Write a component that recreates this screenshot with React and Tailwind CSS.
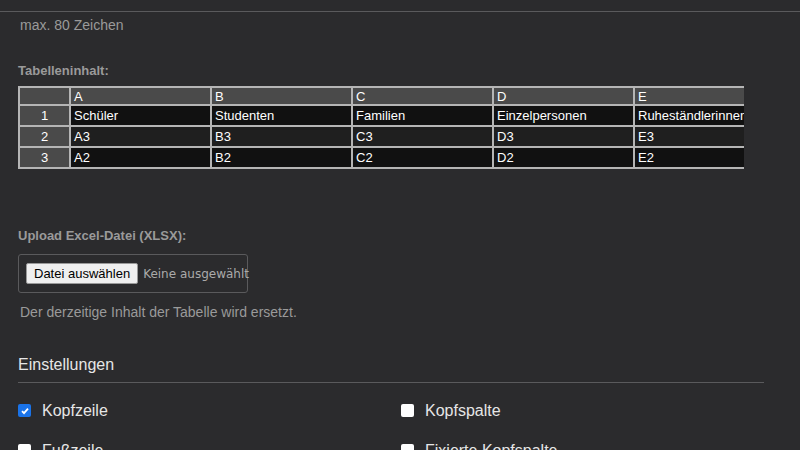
const cols = ["A", "B", "C", "D", "E"];
const rows = [
  ["Schüler", "Studenten", "Familien", "Einzelpersonen", "Ruheständlerinnen"],
  ["A3", "B3", "C3", "D3", "E3"],
  ["A2", "B2", "C2", "D2", "E2"],
];

const Check = ({ checked, label }) => (
  <label className="flex items-center gap-[11px] text-[16px] leading-[19px] text-[#e6e6e6]">
    {checked ? (
      <span className="w-[13px] h-[13px] rounded-[2px] bg-[#1a73e8] flex items-center justify-center">
        <svg width="10" height="10" viewBox="0 0 10 10"><path d="M2 5.2l2 2 4-4.5" stroke="white" strokeWidth="1.8" fill="none" /></svg>
      </span>
    ) : (
      <span className="w-[13px] h-[13px] rounded-[2px] bg-white" />
    )}
    {label}
  </label>
);

export default function App() {
  return (
    <div className="w-[800px] h-[450px] overflow-hidden bg-[#2b2b2d] font-[family-name:Liberation_Sans,Arial,sans-serif]">
      <div className="h-[12px] border-b border-[#5a5a5c]" />
      <div className="pl-[18px]">
        <p className="pt-[5px] pl-[2px] text-[14px] leading-[17px] text-[#9a9a9a]">max. 80 Zeichen</p>
        <p className="mt-[29px] text-[13px] leading-[16px] font-bold text-[#9a9a9a]">Tabelleninhalt:</p>
        <div className="mt-[7px] w-[726px] overflow-hidden">
          <table className="w-[740px] border-collapse text-[13px] leading-[15px] text-white table-fixed">
            <colgroup>
              <col className="w-[51px]" />
              <col className="w-[141px]" />
              <col className="w-[141px]" />
              <col className="w-[141px]" />
              <col className="w-[141px]" />
              <col className="w-[125px]" />
            </colgroup>
            <tbody>
              <tr className="h-[18px] bg-[#4a4a4a]">
                <td className="border-2 border-[#b5b5b5] p-0" />
                {cols.map((c) => (
                  <td key={c} className="border-2 border-[#b5b5b5] px-[3px] py-0">{c}</td>
                ))}
              </tr>
              {rows.map((r, i) => (
                <tr key={i} className={`h-[21px] ${i === 1 ? "bg-[#1f1f1f]" : "bg-[#111]"}`}>
                  <td className="border-2 border-[#b5b5b5] bg-[#4a4a4a] text-center p-0">{i + 1}</td>
                  {r.map((v, j) => (
                    <td key={j} className="border-2 border-[#b5b5b5] px-[3px] py-0 whitespace-nowrap">{v}</td>
                  ))}
                </tr>
              ))}
            </tbody>
          </table>
        </div>
        <p className="mt-[59px] text-[13px] leading-[16px] font-bold text-[#9a9a9a]">Upload Excel-Datei (XLSX):</p>
        <div className="mt-[10px] w-[230px] h-[39px] border border-[#5a5a5c] rounded-[3px] flex items-center pl-[7px] gap-[5px] whitespace-nowrap">
          <span className="bg-[#efefef] text-black text-[13px] leading-[15px] px-[7px] py-[2px] rounded-[2px] border border-[#999]">Datei auswählen</span>
          <span className="text-[12px] text-[#aaa] font-[family-name:DejaVu_Sans,sans-serif]">Keine ausgewählt</span>
        </div>
        <p className="mt-[11px] pl-[2px] text-[14px] leading-[17px] text-[#9a9a9a]">Der derzeitige Inhalt der Tabelle wird ersetzt.</p>
        <div className="mt-[34px] w-[746px] border-b border-[#5a5a5c] pb-[8px] text-[16px] leading-[19px] text-[#e6e6e6]">Einstellungen</div>
        <div className="mt-[18px] grid grid-cols-[383px_1fr] gap-y-[21px]">
          <Check checked label="Kopfzeile" />
          <Check label="Kopfspalte" />
          <Check label="Fußzeile" />
          <Check label="Fixierte Kopfspalte" />
        </div>
      </div>
    </div>
  );
}
